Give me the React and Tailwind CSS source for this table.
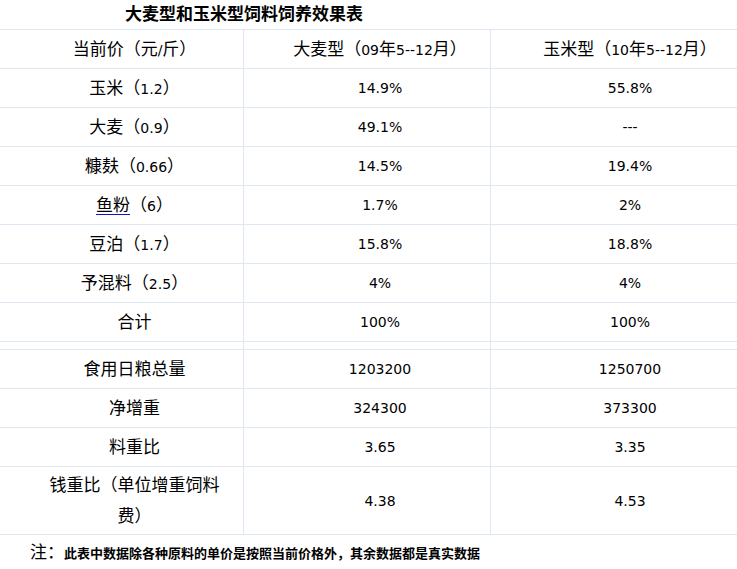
import React from 'react';

// 数据
const rows = [
  ['玉米（1.2）', '14.9%', '55.8%'],
  ['大麦（0.9）', '49.1%', '---'],
  ['糠麸（0.66）', '14.5%', '19.4%'],
  ['@鱼粉（6）', '1.7%', '2%'],
  ['豆泊（1.7）', '15.8%', '18.8%'],
  ['予混料（2.5）', '4%', '4%'],
  ['合计', '100%', '100%'],
];

const rows2 = [
  ['食用日粮总量', '1203200', '1250700'],
  ['净增重', '324300', '373300'],
  ['料重比', '3.65', '3.35'],
];

// CJK 用大一点的字号，数字用 DejaVu
function T({ text }) {
  const parts = text.split(/([\u3000-\u9fff\uff00-\uffef]+)/).filter(Boolean);
  return parts.map((p, i) =>
    /[\u3000-\u9fff\uff00-\uffef]/.test(p)
      ? <span key={i} className="text-[17px]">{p}</span>
      : <span key={i} className="text-[14px]">{p}</span>
  );
}

function Cell({ children }) {
  return (
    <td className="border border-[#dde8f3] pl-[26px] pr-0 text-center align-middle h-[39px] leading-[30px]">
      {children}
    </td>
  );
}

function Label({ text }) {
  if (text.startsWith('@')) {
    const t = text.slice(1);
    return (
      <>
        <span className="text-[17px] underline decoration-[#1010d0] underline-offset-[3px]">{t.slice(0, 2)}</span>
        <T text={t.slice(2)} />
      </>
    );
  }
  return <T text={text} />;
}

export default function App() {
  return (
    <div className="w-[737px] h-[569px] overflow-hidden bg-white text-black" style={{ fontFamily: '"DejaVu Sans", "Noto Sans CJK SC", sans-serif' }}>
      <div className="h-[29px] pl-[125px] pt-[3px] text-[17px] font-bold leading-[22px]">大麦型和玉米型饲料饲养效果表</div>
      <table className="border-collapse w-[744px] -ml-px table-fixed">
        <colgroup>
          <col className="w-[244px]" />
          <col className="w-[247px]" />
          <col className="w-[253px]" />
        </colgroup>
        <tbody>
          <tr>
            <Cell><T text="当前价（元/斤）" /></Cell>
            <Cell><T text="大麦型（09年5--12月）" /></Cell>
            <Cell><T text="玉米型（10年5--12月）" /></Cell>
          </tr>
          {rows.map(r => (
            <tr key={r[0]}>
              <Cell><Label text={r[0]} /></Cell>
              <Cell><T text={r[1]} /></Cell>
              <Cell><T text={r[2]} /></Cell>
            </tr>
          ))}
          <tr>
            <td className="border border-[#dde8f3] h-[8px] p-0"></td>
            <td className="border border-[#dde8f3] h-[8px] p-0"></td>
            <td className="border border-[#dde8f3] h-[8px] p-0"></td>
          </tr>
          {rows2.map(r => (
            <tr key={r[0]}>
              <Cell><T text={r[0]} /></Cell>
              <Cell><T text={r[1]} /></Cell>
              <Cell><T text={r[2]} /></Cell>
            </tr>
          ))}
          <tr>
            <td className="border border-[#dde8f3] pl-[26px] pr-0 text-center align-middle h-[68px] leading-[30px]">
              <span className="text-[17px]">钱重比（单位增重饲料<br />费）</span>
            </td>
            <Cell><T text="4.38" /></Cell>
            <Cell><T text="4.53" /></Cell>
          </tr>
        </tbody>
      </table>
      <div className="pl-[30px] pt-[6px] leading-[22px] flex items-baseline">
        <span className="text-[17px]">注：</span>
        <span className="text-[13px] font-bold">此表中数据除各种原料的单价是按照当前价格外，其余数据都是真实数据</span>
      </div>
    </div>
  );
}
